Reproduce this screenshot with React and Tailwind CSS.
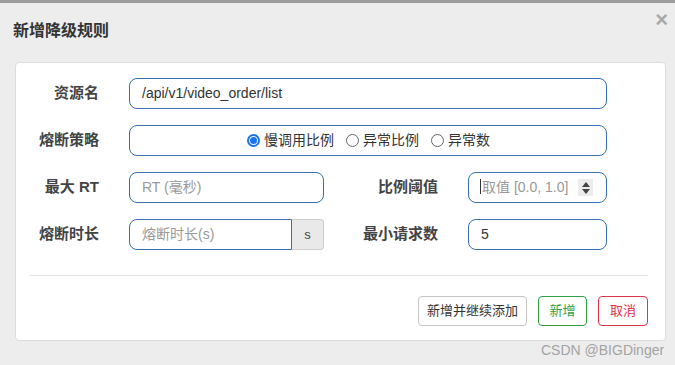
import React from 'react';

const font = { fontFamily: '"Liberation Sans", "Noto Sans CJK SC", sans-serif' };

/* ── Form pieces ───────────────────────────────────────── */
function Label({ children, className = '' }) {
  return (
    <label className={`shrink-0 text-right text-[15px] font-semibold text-[#444] ${className}`}>
      {children}
    </label>
  );
}

function Input({ value, placeholder, className = '' }) {
  return (
    <div
      className={`flex h-[31px] items-center rounded-lg border border-[#3570b6] bg-white px-3 text-[14px] ${className}`}
    >
      {value ? (
        <span className="text-[#333]">{value}</span>
      ) : (
        <span className="text-[#999]">{placeholder}</span>
      )}
    </div>
  );
}

function Radio({ checked, label }) {
  return (
    <span className="flex items-center gap-[4px] text-[14px] text-[#333]">
      {checked ? (
        <span className="flex h-[13px] w-[13px] items-center justify-center rounded-full border-2 border-[#1a73e8] bg-white">
          <span className="h-[7px] w-[7px] rounded-full bg-[#1a73e8]" />
        </span>
      ) : (
        <span className="h-[13px] w-[13px] rounded-full border border-[#666] bg-white" />
      )}
      {label}
    </span>
  );
}

/* ── Main component ─────────────────────────────────────── */
export default function App() {
  return (
    <div className="relative h-[365px] w-[675px] overflow-hidden bg-[#ededed]" style={font}>
      <div className="h-[3px] bg-[#9d9d9d]" />

      {/* Header */}
      <div className="flex h-[59px] items-start justify-between pl-[13px] pr-[7px]">
        <h3 className="mt-[16px] text-[16px] font-semibold text-[#333]">新增降级规则</h3>
        <span className="mt-[6px] text-[22px] font-bold leading-none text-[#a9a9a9]">×</span>
      </div>

      {/* Card */}
      <div className="ml-[15px] mr-[9px] h-[279px] rounded border border-[#dcdcdc] bg-white pt-[15px]">
        <div className="flex flex-col gap-[16px]">
          <div className="flex items-center">
            <Label className="w-[83px]">资源名</Label>
            <Input className="ml-[30px] w-[478px]" value="/api/v1/video_order/list" />
          </div>

          <div className="flex items-center">
            <Label className="w-[83px]">熔断策略</Label>
            <div className="ml-[30px] flex h-[31px] w-[478px] items-center gap-[12px] rounded-lg border border-[#3570b6] bg-white pl-[117px]">
              <Radio checked label="慢调用比例" />
              <Radio label="异常比例" />
              <Radio label="异常数" />
            </div>
          </div>

          <div className="flex items-center">
            <Label className="w-[83px]">最大 RT</Label>
            <Input className="ml-[30px] w-[195px]" placeholder="RT (毫秒)" />
            <Label className="w-[114px]">比例阈值</Label>
            <div className="ml-[30px] flex h-[31px] w-[139px] items-center justify-between rounded-lg border border-[#3570b6] bg-white pl-[11px] pr-[13px] text-[14px]">
              <span className="text-[#999]">
                <span className="mr-[1px] inline-block h-[15px] w-px translate-y-[2px] bg-[#333]" />
                取值 [0.0, 1.0]
              </span>
              <span className="flex h-[17px] w-[15px] flex-col items-center justify-center gap-[2px] bg-[#ececec]">
                <svg width="8" height="5" viewBox="0 0 8 5"><path d="M4 0 8 5H0z" fill="#444" /></svg>
                <svg width="8" height="5" viewBox="0 0 8 5"><path d="M0 0h8L4 5z" fill="#444" /></svg>
              </span>
            </div>
          </div>

          <div className="flex items-center">
            <Label className="w-[83px]">熔断时长</Label>
            <div className="ml-[30px] flex h-[31px] w-[195px]">
              <div className="flex flex-1 items-center rounded-l-lg border border-[#3570b6] bg-white px-3 text-[14px] text-[#999]">
                熔断时长(s)
              </div>
              <div className="flex w-[32px] items-center justify-center rounded-r border border-l-0 border-[#ccc] bg-[#e9e9e9] text-[13px] text-[#444]">
                s
              </div>
            </div>
            <Label className="w-[114px]">最小请求数</Label>
            <Input className="ml-[30px] w-[139px]" value="5" />
          </div>
        </div>

        <div className="ml-[14px] mr-[17px] mt-[25px] border-t border-[#e2e2e2]" />

        {/* Footer buttons */}
        <div className="mr-[17px] mt-[20px] flex justify-end gap-[11px] text-[13px]">
          <button className="h-[30px] w-[109px] rounded border border-[#c4c4c4] bg-white text-[#333]">
            新增并继续添加
          </button>
          <button className="h-[30px] w-[49px] rounded border border-[#2e9e47] bg-white text-[#2e9e47]">
            新增
          </button>
          <button className="h-[30px] w-[50px] rounded border border-[#dc3545] bg-white text-[#dc3545]">
            取消
          </button>
        </div>
      </div>

      {/* Watermark */}
      <span className="absolute left-[541px] top-[340px] text-[14px] text-[#a3a3a3]">CSDN @BIGDinger</span>
    </div>
  );
}
